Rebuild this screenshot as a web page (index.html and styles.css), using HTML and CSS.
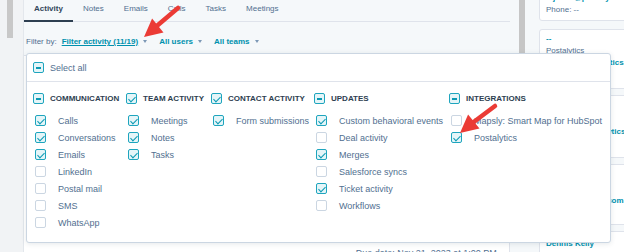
FILE: index.html
```html
<!DOCTYPE html>
<html lang="en">
<head>
  <meta charset="UTF-8">
  <title>Activity filter</title>
  <link rel="stylesheet" href="styles.css">
</head>
<body>
  <div class="page">
    <div class="rail"><div class="rail-thumb"></div></div>

    <div class="main">
      <div class="tabs">
        <div class="tab active">Activity</div>
        <div class="tab">Notes</div>
        <div class="tab">Emails</div>
        <div class="tab">Calls</div>
        <div class="tab">Tasks</div>
        <div class="tab">Meetings</div>
      </div>

      <div class="filter-bar">
        <span class="filter-label">Filter by:</span>
        <span class="filter-item"><span class="filter-link underline">Filter activity (11/19)</span><span class="caret"></span></span>
        <span class="filter-item"><span class="filter-link">All users</span><span class="caret"></span></span>
        <span class="filter-item"><span class="filter-link">All teams</span><span class="caret"></span></span>
      </div>

      <div class="timeline">
        <div class="timeline-row">
          <span class="row-mark"></span>
          <span class="row-title">Marcy Jones filed a ticket to Michael S.</span>
          <span class="row-date">Due date: Nov 21, 2023 at 1:00 PM EST</span>
        </div>
      </div>
    </div>

    <div class="gutter"><div class="gutter-thumb"></div></div>

    <div class="side">
      <div class="card card-first">
        <div class="line link">mjones@postalytics.com</div>
        <div class="line muted">Phone: --</div>
      </div>
      <div class="card card-second">
        <div class="line link">--</div>
        <div class="line muted">Postalytics</div>
        <div class="line link">mjones@postalytics.com</div>
      </div>
      <div class="card card-third">
        <div class="line link">support@postalytics.com</div>
      </div>
      <div class="card card-fourth">
        <div class="line link">dk@postalytics.com</div>
      </div>
      <div class="card card-fifth">
        <div class="line link">Dennis Kelly</div>
      </div>
    </div>
  </div>

  <!-- filter activity dropdown -->
  <div class="dropdown">
    <div class="select-all">
      <span class="cb some"></span>
      <span>Select all</span>
    </div>

    <div class="columns">
      <div class="group">
        <div class="group-head"><span class="cb some"></span>Communication</div>
        <div class="item"><span class="cb on"></span>Calls</div>
        <div class="item"><span class="cb on"></span>Conversations</div>
        <div class="item"><span class="cb on"></span>Emails</div>
        <div class="item"><span class="cb"></span>LinkedIn</div>
        <div class="item"><span class="cb"></span>Postal mail</div>
        <div class="item"><span class="cb"></span>SMS</div>
        <div class="item"><span class="cb"></span>WhatsApp</div>
      </div>
      <div class="group">
        <div class="group-head"><span class="cb on"></span>Team activity</div>
        <div class="item"><span class="cb on"></span>Meetings</div>
        <div class="item"><span class="cb on"></span>Notes</div>
        <div class="item"><span class="cb on"></span>Tasks</div>
      </div>
      <div class="group">
        <div class="group-head"><span class="cb on"></span>Contact activity</div>
        <div class="item"><span class="cb on"></span>Form submissions</div>
      </div>
      <div class="group">
        <div class="group-head"><span class="cb some"></span>Updates</div>
        <div class="item"><span class="cb on"></span>Custom behavioral events</div>
        <div class="item"><span class="cb"></span>Deal activity</div>
        <div class="item"><span class="cb on"></span>Merges</div>
        <div class="item"><span class="cb"></span>Salesforce syncs</div>
        <div class="item"><span class="cb on"></span>Ticket activity</div>
        <div class="item"><span class="cb"></span>Workflows</div>
      </div>
      <div class="group">
        <div class="group-head"><span class="cb some"></span>Integrations</div>
        <div class="item"><span class="cb"></span>Mapsly: Smart Map for HubSpot</div>
        <div class="item"><span class="cb on"></span>Postalytics</div>
      </div>
    </div>
  </div>

  <!-- red callout arrows -->
  <svg class="arrows" width="624" height="252" viewBox="0 0 624 252">
    <line x1="178" y1="8" x2="155" y2="27.5" stroke="#eb3b35" stroke-width="4.5" stroke-linecap="round"/>
    <polygon points="144,37 163.5,32.4 152.1,18.6" fill="#eb3b35"/>
    <line x1="495" y1="106" x2="471" y2="124" stroke="#eb3b35" stroke-width="4.5" stroke-linecap="round"/>
    <polygon points="460,133 479.5,128.4 468.1,114.6" fill="#eb3b35"/>
  </svg>
</body>
</html>
```

FILE: styles.css
```css
* {
  box-sizing: border-box;
}

body {
  margin: 0;
  width: 624px;
  height: 252px;
  overflow: hidden;
  position: relative;
  background: #f5f8fa;
  font-family: "Liberation Sans", Arial, sans-serif;
  color: #33475b;
}

.page {
  display: flex;
  height: 252px;
}

/* left rail with scrollbar */
.rail {
  width: 24px;
  flex: none;
  padding-left: 7px;
  background: #f1f3f5;
  border-right: 1px solid #e3e7ec;
}

.rail-thumb {
  width: 6px;
  height: 38px;
  background: #c8c8c8;
}

/* main column */
.main {
  width: 486px;
  flex: none;
}

.tabs {
  display: flex;
  height: 22px;
  border-bottom: 1px solid #dfe3eb;
}

.tab {
  height: 22px;
  margin-bottom: -1px;
  padding: 4px 10px 0;
  font-size: 8px;
  line-height: 10px;
  color: #516f90;
}

.tab.active {
  color: #33475b;
  font-weight: bold;
  border-bottom: 2px solid #2d3e50;
}

.filter-bar {
  display: flex;
  align-items: center;
  padding: 14px 0 8px 2px;
  font-size: 8px;
  line-height: 11px;
}

.filter-label {
  color: #516f90;
  margin-right: 5px;
}

.filter-item {
  display: flex;
  align-items: center;
  margin-right: 12px;
}

.filter-link {
  color: #0091ae;
  font-weight: bold;
}

.filter-link.underline {
  text-decoration: underline;
}

.caret {
  width: 0;
  height: 0;
  margin-left: 5px;
  border-left: 2.5px solid transparent;
  border-right: 2.5px solid transparent;
  border-top: 3px solid #7c98b6;
}

.timeline {
  height: 300px;
  padding: 192px 7px 0;
  background: #fff;
  border: 1px solid #dfe3eb;
  border-left: none;
}

.timeline-row {
  display: flex;
  align-items: center;
  font-size: 9px;
  line-height: 11px;
}

.row-mark {
  width: 4px;
  height: 4px;
  margin-right: 7px;
  background: #0091ae;
}

.row-title {
  width: 346px;
  color: #33475b;
  font-weight: bold;
}

.row-date {
  color: #516f90;
}

/* gutter with second scrollbar */
.gutter {
  width: 29px;
  flex: none;
  padding-left: 9px;
}

.gutter-thumb {
  width: 6px;
  height: 60px;
  background: #c6c6c6;
}

/* right sidebar cards */
.side {
  width: 85px;
  flex: none;
}

.card {
  width: 100px;
  padding: 0 6px;
  background: #fff;
  border: 1px solid #dfe3eb;
  border-radius: 3px;
  margin-bottom: 6px;
  white-space: nowrap;
  font-size: 8px;
  line-height: 12px;
}

.card-first {
  margin-top: -13px;
  padding-top: 4px;
  height: 34px;
  margin-bottom: 8px;
}

.card-second {
  padding-top: 3px;
  height: 60px;
}

.card-third {
  padding-top: 30px;
  height: 63px;
}

.card-fourth {
  padding-top: 30px;
  height: 61px;
}

.card-fifth {
  padding-top: 6px;
  height: 40px;
}

.line.link {
  color: #0091ae;
  font-weight: bold;
}

.line.muted {
  color: #516f90;
}

/* dropdown */
.dropdown {
  position: absolute;
  left: 26px;
  top: 53px;
  width: 585px;
  height: 190px;
  z-index: 2;
  background: #fff;
  border: 1px solid #cbd6e2;
  border-radius: 3px;
  box-shadow: 0 1px 5px rgba(45, 62, 80, 0.12);
}

.select-all {
  display: flex;
  align-items: center;
  gap: 6px;
  height: 28px;
  padding-left: 6px;
  border-bottom: 1px solid #dfe3eb;
  font-size: 9px;
  color: #516f90;
}

.columns {
  display: grid;
  grid-template-columns: 93px 85px 103px 135px 1fr;
  padding: 11px 6px 0;
}

.group-head {
  display: flex;
  align-items: center;
  gap: 6px;
  height: 11px;
  margin-bottom: 8px;
  font-size: 8px;
  font-weight: bold;
  text-transform: uppercase;
  color: #2d3e50;
  white-space: nowrap;
}

.item {
  display: flex;
  align-items: center;
  gap: 12px;
  height: 17px;
  padding-left: 2px;
  font-size: 9px;
  color: #516f90;
  white-space: nowrap;
}

/* checkboxes */
.cb {
  position: relative;
  flex: none;
  width: 11px;
  height: 11px;
  background: #fff;
  border: 1px solid #cbd6e2;
  border-radius: 2px;
}

.cb.on,
.cb.some {
  background: #e5f5f8;
  border-color: #1ea5be;
}

.cb.on::after {
  content: "";
  position: absolute;
  left: 3px;
  top: 0.5px;
  width: 3px;
  height: 6px;
  border: solid #0b99b3;
  border-width: 0 1.5px 1.5px 0;
  transform: rotate(45deg);
}

.cb.some::after {
  content: "";
  position: absolute;
  left: 2px;
  top: 4px;
  width: 5px;
  height: 1.5px;
  background: #0b99b3;
}

.arrows {
  position: absolute;
  left: 0;
  top: 0;
  z-index: 3;
  pointer-events: none;
}
```
